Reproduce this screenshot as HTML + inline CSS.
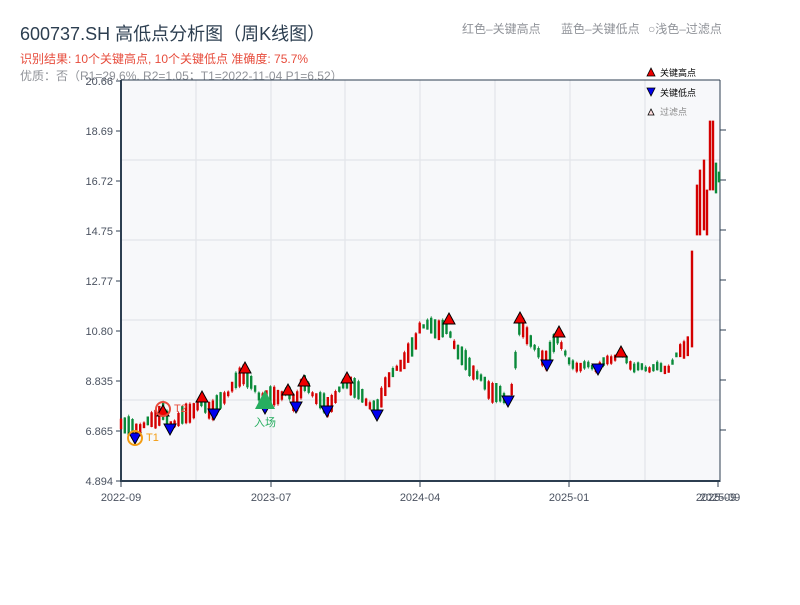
<!DOCTYPE html>
<html><head><meta charset="utf-8"><style>
body{margin:0;width:800px;height:600px;background:#fff;overflow:hidden;font-family:"Liberation Sans","Noto Sans CJK SC",sans-serif}
</style></head><body>
<svg id="sv" width="800" height="600" xmlns="http://www.w3.org/2000/svg" font-family="Liberation Sans, Noto Sans CJK SC, sans-serif">
<text x="20" y="40" font-size="18" fill="#2c3e50">600737.SH 高低点分析图（周K线图）</text>
<text x="20" y="63" font-size="12" fill="#e74c3c">识别结果: 10个关键高点, 10个关键低点  准确度: 75.7%</text>
<text x="20" y="80" font-size="12" fill="#909399">优质：否（R1=29.6%, R2=1.05；T1=2022-11-04 P1=6.52）</text>
<text x="462" y="33" font-size="12" fill="#909399">红色–关键高点</text>
<text x="561" y="33" font-size="12" fill="#909399">蓝色–关键低点</text>
<text x="648" y="33" font-size="12" fill="#909399">○浅色–过滤点</text>
<rect x="121" y="80" width="599" height="401" fill="#f7f8fa"/>
<g stroke="#e3e5ea" stroke-width="1.2">
<line x1="196" y1="80" x2="196" y2="481"/><line x1="271" y1="80" x2="271" y2="481"/><line x1="345" y1="80" x2="345" y2="481"/><line x1="420" y1="80" x2="420" y2="481"/><line x1="495" y1="80" x2="495" y2="481"/><line x1="570" y1="80" x2="570" y2="481"/><line x1="645" y1="80" x2="645" y2="481"/>
<line x1="121" y1="160" x2="720" y2="160"/><line x1="121" y1="240" x2="720" y2="240"/><line x1="121" y1="320" x2="720" y2="320"/><line x1="121" y1="400" x2="720" y2="400"/>
</g>
<g stroke="#2c3e50" stroke-width="2"><line x1="121" y1="80" x2="121" y2="482"/><line x1="120" y1="481" x2="720" y2="481"/><line x1="121" y1="80" x2="720" y2="80" stroke-width="1"/><line x1="720" y1="80" x2="720" y2="482" stroke-width="1"/></g>
<g stroke="#2c3e50" stroke-width="1">
<line x1="116" y1="81" x2="121" y2="81"/><line x1="116" y1="131" x2="121" y2="131"/><line x1="116" y1="181" x2="121" y2="181"/><line x1="116" y1="231" x2="121" y2="231"/><line x1="116" y1="281" x2="121" y2="281"/><line x1="116" y1="331" x2="121" y2="331"/><line x1="116" y1="381" x2="121" y2="381"/><line x1="116" y1="431" x2="121" y2="431"/><line x1="116" y1="481" x2="121" y2="481"/>
<line x1="720" y1="130" x2="726" y2="130"/><line x1="720" y1="180" x2="726" y2="180"/><line x1="720" y1="230" x2="726" y2="230"/><line x1="720" y1="280" x2="726" y2="280"/><line x1="720" y1="330" x2="726" y2="330"/><line x1="720" y1="380" x2="726" y2="380"/><line x1="720" y1="430" x2="726" y2="430"/>
<line x1="121" y1="481" x2="121" y2="487"/><line x1="271" y1="481" x2="271" y2="487"/><line x1="420" y1="481" x2="420" y2="487"/><line x1="569" y1="481" x2="569" y2="487"/><line x1="718" y1="481" x2="718" y2="487"/>
</g>
<g font-size="11" fill="#4a5260" text-anchor="end">
<text x="113" y="85">20.66</text><text x="113" y="135">18.69</text><text x="113" y="185">16.72</text><text x="113" y="235">14.75</text><text x="113" y="285">12.77</text><text x="113" y="335">10.80</text><text x="113" y="385">8.835</text><text x="113" y="435">6.865</text><text x="113" y="485">4.894</text>
</g>
<g font-size="11" fill="#4a5260" text-anchor="middle">
<text x="121" y="501">2022-09</text><text x="271" y="501">2023-07</text><text x="420" y="501">2024-04</text><text x="569" y="501">2025-01</text><text x="716" y="501">2025-09</text><text x="720" y="501">2025-09</text>
</g>
<g id="candles"></g>
<g stroke="#000" stroke-width="1" fill="#e00">
<path d="M157,416 L163,405 L169,416Z"/><path d="M196,402 L202,391 L208,402Z"/><path d="M239,373 L245,362 L251,373Z"/><path d="M282,395 L288,384 L294,395Z"/><path d="M298,386 L304,375 L310,386Z"/><path d="M341,383 L347,372 L353,383Z"/><path d="M443,324 L449,313 L455,324Z"/><path d="M514,323 L520,312 L526,323Z"/><path d="M553,337 L559,326 L565,337Z"/><path d="M615,357 L621,346 L627,357Z"/>
</g>
<g stroke="#000" stroke-width="1" fill="#00e">
<path d="M129,433 L141,433 L135,444Z"/><path d="M164,424 L176,424 L170,435Z"/><path d="M208,409 L220,409 L214,420Z"/><path d="M259,403 L271,403 L265,414Z"/><path d="M290,402 L302,402 L296,413Z"/><path d="M321,406 L333,406 L327,417Z"/><path d="M371,410 L383,410 L377,421Z"/><path d="M502,396 L514,396 L508,407Z"/><path d="M541,360 L553,360 L547,371Z"/><path d="M592,364 L604,364 L598,375Z"/>
</g>
<path d="M255,409 L265,390 L275,409Z" fill="#27ae60"/>
<text x="265" y="426" font-size="11" fill="#27ae60" text-anchor="middle">入场</text>
<circle cx="135" cy="438" r="7" fill="none" stroke="#f39c12" stroke-width="2"/>
<text x="146" y="441" font-size="11" fill="#f39c12">T1</text>
<circle cx="163" cy="409" r="7" fill="none" stroke="#e74c3c" stroke-width="2"/>
<text x="174" y="412" font-size="11" fill="#e74c3c">T2</text>
<path d="M647,76 L651,68 L655,76Z" fill="#e00" stroke="#000" stroke-width="0.8"/><text x="660" y="76" font-size="9" fill="#000">关键高点</text>
<path d="M647,88 L655,88 L651,96Z" fill="#00e" stroke="#000" stroke-width="0.8"/><text x="660" y="96" font-size="9" fill="#000">关键低点</text>
<path d="M648,115 L651,109 L654,115Z" fill="#fdd" stroke="#000" stroke-width="0.8"/><text x="660" y="115" font-size="9" fill="#888">过滤点</text>
</svg>
<script>
(function(){
var NS="http://www.w3.org/2000/svg";
var pts=[[121,422],[135,432],[163,412],[170,425],[200,405],[214,410],[244,372],[258,395],[265,400],[288,392],[295,405],[303,383],[327,408],[347,380],[377,412],[385,385],[415,345],[420,325],[448,330],[460,355],[490,390],[508,400],[513,385],[520,320],[535,350],[547,360],[558,335],[570,365],[598,367],[620,353],[635,368],[670,368],[680,350],[690,345]];
function f(x){for(var i=1;i<pts.length;i++){if(x<=pts[i][0]){var a=pts[i-1],b=pts[i];return a[1]+(b[1]-a[1])*(x-a[0])/(b[0]-a[0]);}}return pts[pts.length-1][1];}
var g=document.getElementById('candles');
var red='',grn='';
function bar(x,top,bot,t2,b2,isRed){
 var d='M'+x.toFixed(1)+','+t2.toFixed(1)+'V'+b2.toFixed(1)+'M'+(x-0.8).toFixed(1)+','+top.toFixed(1)+'h1.6V'+bot.toFixed(1)+'h-1.6Z';
 if(isRed)red+=d;else grn+=d;
}
var i=0;
for(var x=121;x<=689;x+=3.83){
 i++;
 var m=f(x),m2=f(x+3.83);var amp=(x>565&&x<680)?5:16;
 var h1=Math.abs(Math.sin(i*2.71)),h2=Math.sin(i*1.37);
 var half=(3+amp*h1)/2;
 var isRed=(m2<m)?(h2>-0.6):(h2>0.6);
 var top=m-half+h2*2,bot=m+half+h2*2;
 bar(x,top,bot,top-2*Math.abs(Math.cos(i)),bot+2*Math.abs(Math.sin(i*3.1)),isRed);
}
var ex=[[692,251,347,1],[697,185,235,1],[700,170,235,1],[704,160,230,1],[707,190,235,1],[710,121,190,1],[713,121,190,1],[716,163,193,0],[719,172,182,0]];
ex.forEach(function(e){bar(e[0],e[1],e[2],e[1],e[2],e[3]==1);});
var p1=document.createElementNS(NS,'path');p1.setAttribute('d',red);p1.setAttribute('fill','#d40000');p1.setAttribute('stroke','#d40000');p1.setAttribute('stroke-width','0.8');g.appendChild(p1);
var p2=document.createElementNS(NS,'path');p2.setAttribute('d',grn);p2.setAttribute('fill','#0a8a3a');p2.setAttribute('stroke','#0a8a3a');p2.setAttribute('stroke-width','0.8');g.appendChild(p2);
})();
</script>
</body></html>
